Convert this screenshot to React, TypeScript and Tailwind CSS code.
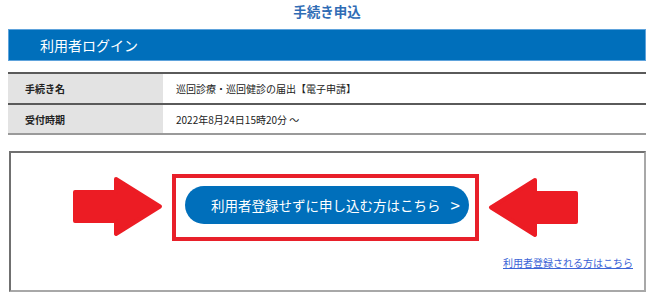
const font = { fontFamily: '"Noto Sans CJK JP", "Noto Sans", sans-serif' }

function ArrowRight() {
    return (
        <svg width="91" height="61" viewBox="0 0 91 61" className="shrink-0">
            <path
                d="M3 16 L44 16 L44 3 L88 30.5 L44 58 L44 45 L3 45 Z"
                fill="#ec1c24"
                stroke="#ec1c24"
                strokeWidth="4"
                strokeLinejoin="round"
            />
        </svg>
    )
}

function ArrowLeft() {
    return (
        <svg width="91" height="61" viewBox="0 0 91 61" className="shrink-0">
            <path
                d="M88 16 L47 16 L47 3 L3 30.5 L47 58 L47 45 L88 45 Z"
                fill="#ec1c24"
                stroke="#ec1c24"
                strokeWidth="4"
                strokeLinejoin="round"
            />
        </svg>
    )
}

export default function App() {
    return (
        <main className="w-[660px] h-[302px] bg-white overflow-hidden pl-2 pr-[14px]" style={font}>
            {/* TITLE */}
            <div className="h-[29px] flex items-start justify-center pt-[2px]">
                <h1 className="text-[13.5px] font-bold text-[#2f6cb5] leading-[18px]">手続き申込</h1>
            </div>

            {/* LOGIN BAR */}
            <div className="h-[32px] bg-[#006fbb] border border-[#5ea3dc] flex items-center pl-[31px]">
                <span className="text-white text-[14px] leading-none">利用者ログイン</span>
            </div>

            {/* INFO TABLE */}
            <table className="mt-[11px] w-full border-collapse text-[10px] text-[#222]">
                <tbody>
                    <tr className="h-[31px] border-t-2 border-[#5a5a5a]">
                        <th className="w-[155px] bg-[#e3e3e3] text-left font-bold pl-[17px]">手続き名</th>
                        <td className="pl-[13px]">巡回診療・巡回健診の届出【電子申請】</td>
                    </tr>
                    <tr className="h-[30px] border-t-2 border-b-2 border-t-[#5a5a5a] border-b-[#9a9a9a]">
                        <th className="w-[155px] bg-[#e3e3e3] text-left font-bold pl-[17px]">受付時期</th>
                        <td className="pl-[13px]">2022年8月24日15時20分 ～</td>
                    </tr>
                </tbody>
            </table>

            {/* APPLY BOX */}
            <section className="mt-[16px] ml-px h-[141px] border-2 border-[#707070] border-b-[#a8a8a8] border-r-[#a8a8a8] flex flex-col">
                <div className="flex items-center pl-[61px] pt-[21px] gap-[9px]">
                    <div className="mt-[-3px]">
                        <ArrowRight />
                    </div>
                    <div className="w-[307px] h-[67px] border-[4px] border-[#e8202a] pl-[9px] pt-[8px] pr-[5px]">
                        <button className="w-[284px] h-[38px] rounded-full bg-[#006fbb] text-white text-[13.5px] flex items-center pl-[26px] gap-[10px]">
                            <span>利用者登録せずに申し込む方はこちら</span>
                            <span className="text-[17px] leading-none mt-[-2px]">&gt;</span>
                        </button>
                    </div>
                    <div className="mt-[-1px]">
                        <ArrowLeft />
                    </div>
                </div>
                <div className="flex justify-end pr-[11px] mt-[15px]">
                    <a href="#" className="text-[10px] text-[#3b63d6] underline leading-[14px]">
                        利用者登録される方はこちら
                    </a>
                </div>
            </section>
        </main>
    )
}
